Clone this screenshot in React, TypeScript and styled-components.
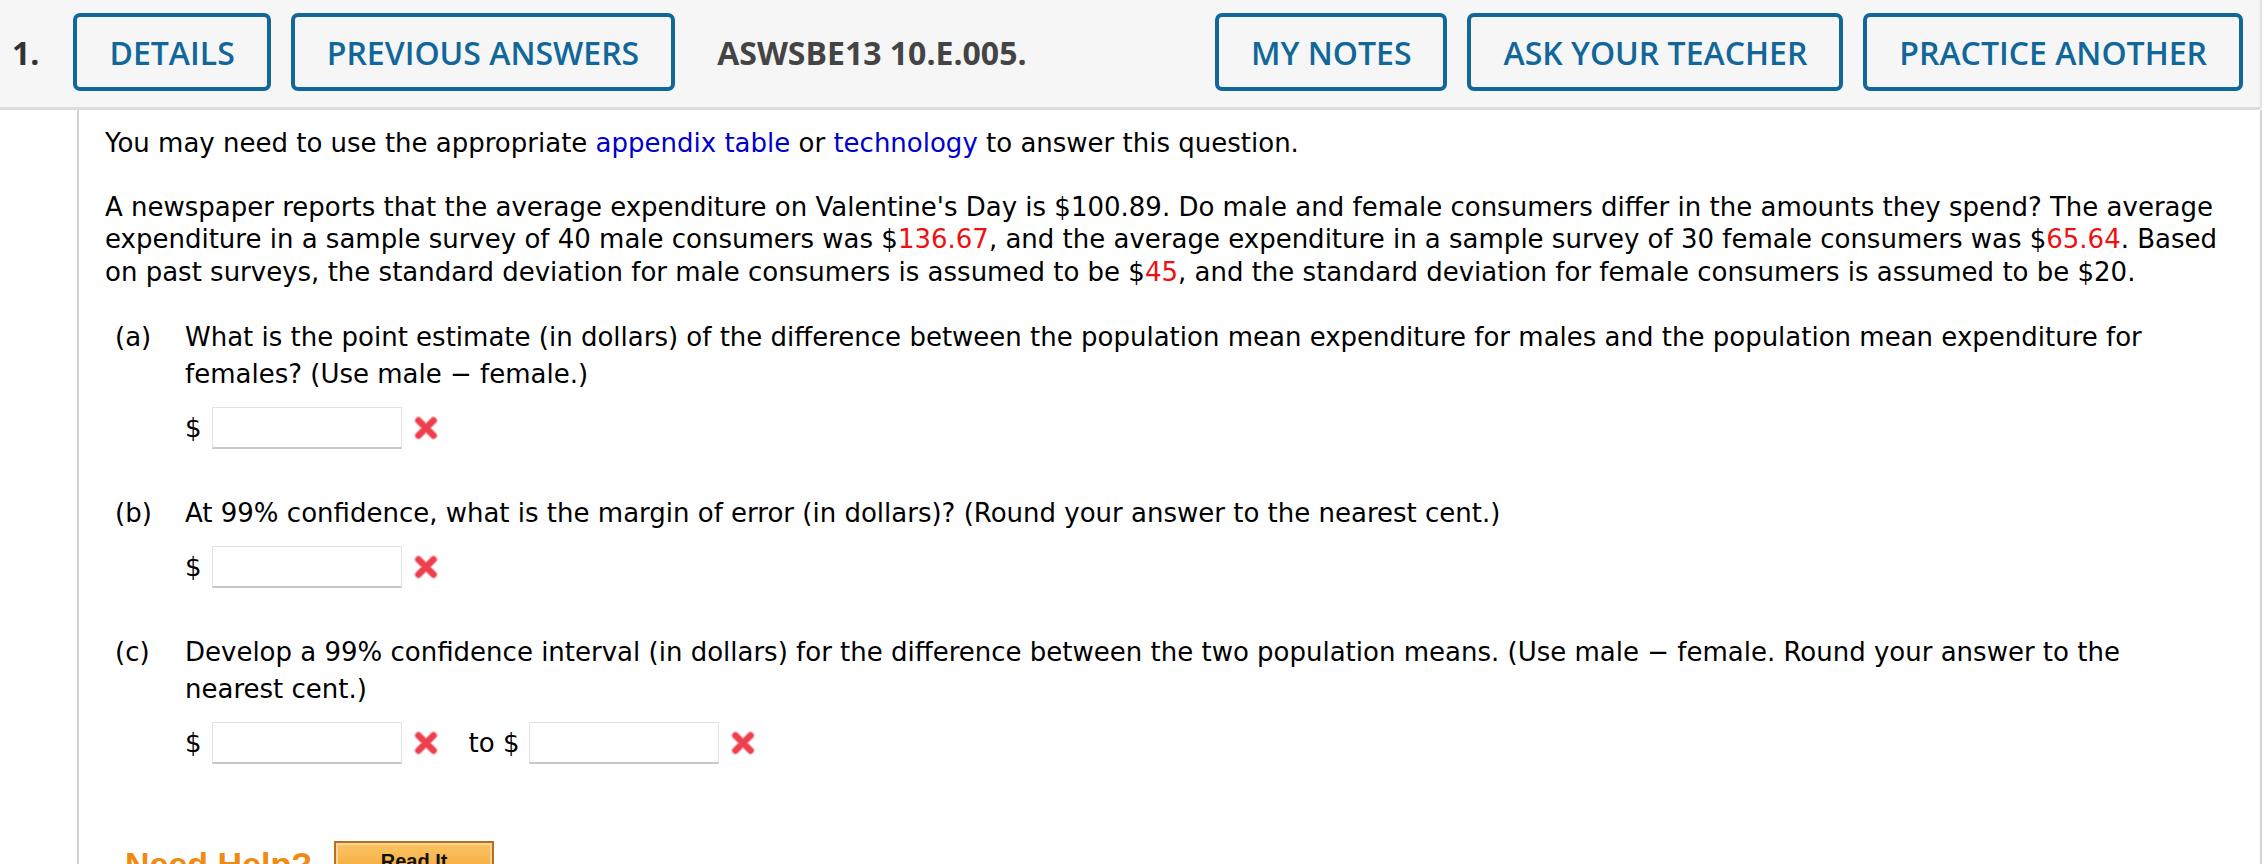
import React from "react";
import styled, { createGlobalStyle } from "styled-components";

const GlobalStyle = createGlobalStyle`
  body {
    margin: 0;
    background: #fff;
  }
`;

const Page = styled.div`
  width: 2264px;
  height: 864px;
  overflow: hidden;
`;

const Header = styled.header`
  box-sizing: border-box;
  width: 2262px;
  height: 110px;
  display: flex;
  align-items: center;
  padding: 0 17px 3px 12px;
  background: #f6f6f6;
  border-bottom: 3px solid #dcdcdc;
  border-right: 2px solid #e2e2e2;
  border-bottom-right-radius: 4px;
  font-family: "Open Sans", "Liberation Sans", sans-serif;
`;

const QuestionNumber = styled.span`
  font-size: 32px;
  font-weight: 700;
  color: #333;
  margin-right: 34px;
`;

const HeaderButton = styled.button`
  box-sizing: border-box;
  height: 78px;
  padding: 0 32px;
  margin-right: 20px;
  background: transparent;
  border: 4px solid #11669a;
  border-radius: 7px;
  color: #11669a;
  font-family: inherit;
  font-size: 32px;
  font-weight: 600;
  white-space: nowrap;

  &:last-child {
    margin-right: 0;
  }
`;

const ProblemCode = styled.span`
  margin-left: 22px;
  font-size: 32px;
  font-weight: 700;
  color: #444;
`;

const Spacer = styled.div`
  flex: 1;
`;

const Body = styled.main`
  box-sizing: border-box;
  margin-left: 77px;
  width: 2185px;
  height: 754px;
  padding: 17px 22px 0 26px;
  border-left: 2px solid #d2d2d2;
  border-right: 2px solid #d2d2d2;
  font-family: "DejaVu Sans", Verdana, sans-serif;
  font-size: 26px;
  color: #000;
`;

const Paragraph = styled.p`
  margin: 0 0 31px;
  line-height: 32.5px;
`;

const Link = styled.span`
  color: #0000cc;
`;

const Given = styled.span`
  color: #ee1111;
`;

const Question = styled.section`
  display: grid;
  grid-template-columns: 70px 1fr;
  padding-left: 10px;
  margin-bottom: 46px;
  line-height: 37px;
`;

const PartLabel = styled.span``;

const Prompt = styled.div`
  padding-right: 30px;
`;

const AnswerRow = styled.div`
  display: flex;
  align-items: center;
  height: 42px;
  margin-top: 14px;
`;

const Dollar = styled.span`
  margin-right: 10px;
`;

const AnswerInput = styled.input`
  box-sizing: border-box;
  width: 190px;
  height: 42px;
  border: 1px solid #e2e2e2;
  border-bottom: 2px solid #c8c8c8;
  background: #fff;
`;

const Mark = styled.svg`
  margin: 0 0 0 11px;
  flex-shrink: 0;
`;

const ToLabel = styled.span`
  margin: 0 10px 0 30px;
`;

const HelpRow = styled.div`
  display: flex;
  align-items: flex-start;
  margin-top: 77px;
  padding-left: 20px;
`;

const HelpText = styled.span`
  font-family: "Liberation Sans", Arial, sans-serif;
  font-size: 34px;
  font-weight: 700;
  color: #f08a12;
  margin-top: 4px;
  margin-right: 22px;
`;

const ReadItButton = styled.button`
  box-sizing: border-box;
  width: 160px;
  height: 40px;
  border: 2px solid #b8701e;
  box-shadow: inset 0 0 0 2px #fbd49a;
  background: linear-gradient(#fbc465, #f4a531);
  font-family: "Liberation Sans", Arial, sans-serif;
  font-size: 20px;
  font-weight: 700;
  color: #111;
`;

const WrongMark = () => (
  <Mark width="26" height="26" viewBox="0 0 26 26">
    <path
      d="M5.5 5.5 L20.5 20.5 M20.5 5.5 L5.5 20.5"
      stroke="#f7a4aa"
      strokeWidth="8"
      strokeLinecap="round"
    />
    <path
      d="M5.5 5.5 L20.5 20.5 M20.5 5.5 L5.5 20.5"
      stroke="#ef3f4c"
      strokeWidth="5.5"
      strokeLinecap="round"
    />
  </Mark>
);

const Answer = () => (
  <>
    <Dollar>$</Dollar>
    <AnswerInput type="text" />
    <WrongMark />
  </>
);

export default function App() {
  return (
    <Page>
      <GlobalStyle />
      <Header>
        <QuestionNumber>1.</QuestionNumber>
        <HeaderButton>DETAILS</HeaderButton>
        <HeaderButton>PREVIOUS ANSWERS</HeaderButton>
        <ProblemCode>ASWSBE13 10.E.005.</ProblemCode>
        <Spacer />
        <HeaderButton>MY NOTES</HeaderButton>
        <HeaderButton>ASK YOUR TEACHER</HeaderButton>
        <HeaderButton>PRACTICE ANOTHER</HeaderButton>
      </Header>
      <Body>
        <Paragraph>
          You may need to use the appropriate <Link>appendix table</Link> or{" "}
          <Link>technology</Link> to answer this question.
        </Paragraph>
        <Paragraph>
          A newspaper reports that the average expenditure on Valentine's Day is
          $100.89. Do male and female consumers differ in the amounts they
          spend? The average expenditure in a sample survey of 40 male consumers
          was $<Given>136.67</Given>, and the average expenditure in a sample
          survey of 30 female consumers was $<Given>65.64</Given>. Based on past
          surveys, the standard deviation for male consumers is assumed to be $
          <Given>45</Given>, and the standard deviation for female consumers is
          assumed to be $20.
        </Paragraph>
        <Question>
          <PartLabel>(a)</PartLabel>
          <Prompt>
            What is the point estimate (in dollars) of the difference between
            the population mean expenditure for males and the population mean
            expenditure for females? (Use male − female.)
            <AnswerRow>
              <Answer />
            </AnswerRow>
          </Prompt>
        </Question>
        <Question>
          <PartLabel>(b)</PartLabel>
          <Prompt>
            At 99% confidence, what is the margin of error (in dollars)? (Round
            your answer to the nearest cent.)
            <AnswerRow>
              <Answer />
            </AnswerRow>
          </Prompt>
        </Question>
        <Question>
          <PartLabel>(c)</PartLabel>
          <Prompt>
            Develop a 99% confidence interval (in dollars) for the difference
            between the two population means. (Use male − female. Round your
            answer to the nearest cent.)
            <AnswerRow>
              <Answer />
              <ToLabel>to $</ToLabel>
              <AnswerInput type="text" />
              <WrongMark />
            </AnswerRow>
          </Prompt>
        </Question>
        <HelpRow>
          <HelpText>Need Help?</HelpText>
          <ReadItButton>Read It</ReadItButton>
        </HelpRow>
      </Body>
    </Page>
  );
}
